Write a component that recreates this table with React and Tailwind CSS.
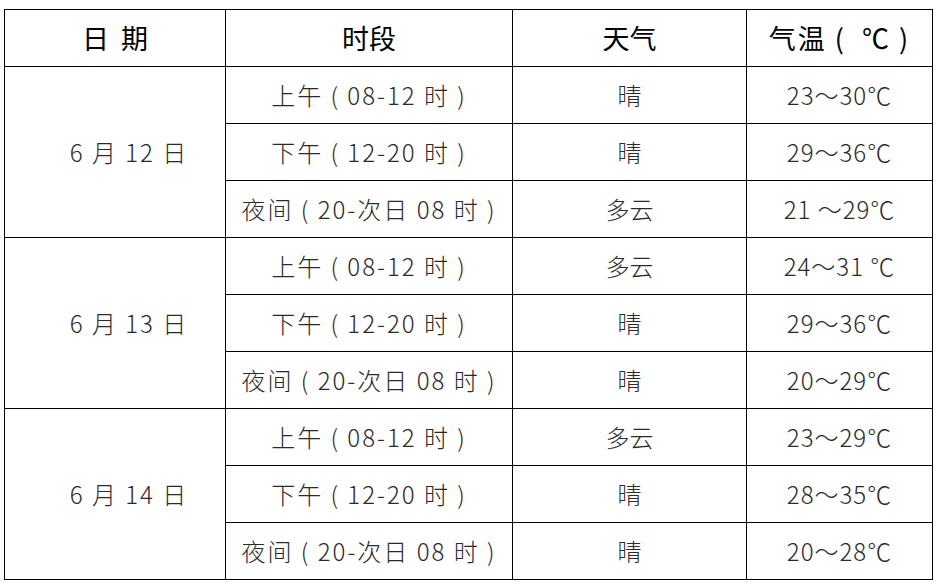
import React from 'react';

const days = [
  {
    date: '6 月 12 日',
    rows: [
      ['上午 ( 08-12 时 )', '晴', '23～30℃'],
      ['下午 ( 12-20 时 )', '晴', '29～36℃'],
      ['夜间 ( 20-次日 08 时 )', '多云', '21 ～29℃'],
    ],
  },
  {
    date: '6 月 13 日',
    rows: [
      ['上午 ( 08-12 时 )', '多云', '24～31 ℃'],
      ['下午 ( 12-20 时 )', '晴', '29～36℃'],
      ['夜间 ( 20-次日 08 时 )', '晴', '20～29℃'],
    ],
  },
  {
    date: '6 月 14 日',
    rows: [
      ['上午 ( 08-12 时 )', '多云', '23～29℃'],
      ['下午 ( 12-20 时 )', '晴', '28～35℃'],
      ['夜间 ( 20-次日 08 时 )', '晴', '20～28℃'],
    ],
  },
];

const cell = 'border border-black text-center align-middle p-0 whitespace-pre';

const App = () => {
  return (
    <div className="h-[586px] w-[938px] overflow-hidden bg-white pl-[4px] pt-[9px] font-['Noto_Sans_CJK_SC','Noto_Sans',sans-serif]">
      <table className="table-fixed border-collapse">
        <colgroup>
          <col className="w-[221px]" />
          <col className="w-[287px]" />
          <col className="w-[234px]" />
          <col className="w-[186px]" />
        </colgroup>
        <thead>
          <tr className="h-[57px] text-[27px] text-black">
            <th className={`${cell} font-normal`}>日  期</th>
            <th className={`${cell} font-normal`}>时段</th>
            <th className={`${cell} font-normal`}>天气</th>
            <th className={`${cell} font-normal tracking-[2px]`}>气温 (  ℃ )</th>
          </tr>
        </thead>
        <tbody className="text-[24px] font-light text-[#2a2a2a]">
          {days.map((d) =>
            d.rows.map((r, i) => (
              <tr key={d.date + i} className="h-[57px]">
                {i === 0 && (
                  <td rowSpan={3} className={`${cell} pl-[28px] tracking-[2px]`}>
                    {d.date}
                  </td>
                )}
                <td className={`${cell} tracking-[2px]`}>{r[0]}</td>
                <td className={cell}>{r[1]}</td>
                <td className={`${cell} tracking-[1px]`}>{r[2]}</td>
              </tr>
            ))
          )}
        </tbody>
      </table>
    </div>
  );
};

export default App;
